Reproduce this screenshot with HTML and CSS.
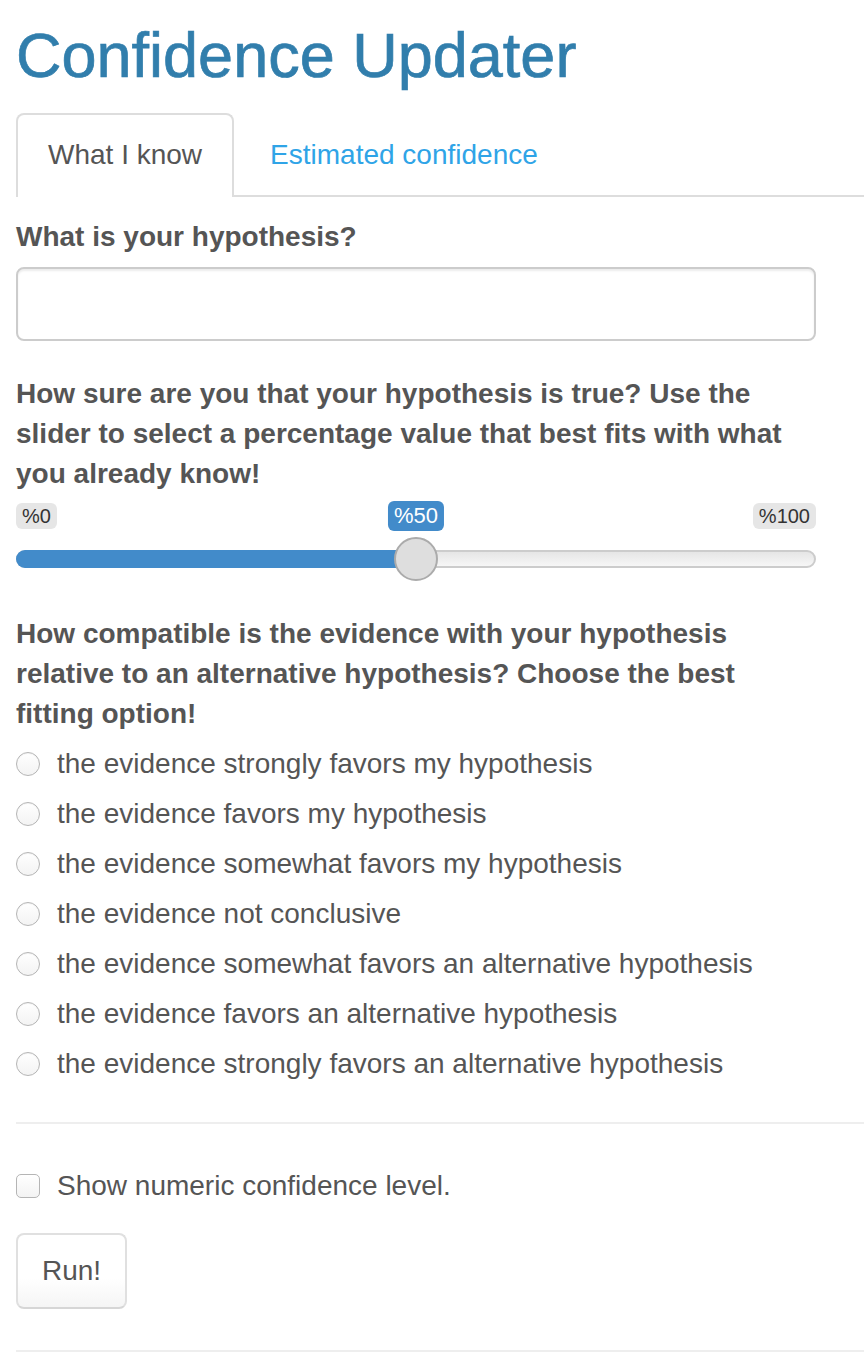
FILE: index.html
```html
<!DOCTYPE html>
<html>
<head>
<meta charset="utf-8">
<title>Confidence Updater</title>
<link rel="stylesheet" href="styles.css">
</head>
<body>
<div class="page">
  <h2 class="title">Confidence Updater</h2>
  <ul class="tabs">
    <li class="tab active">What I know</li>
    <li class="tab"><a class="tab-link" href="#">Estimated confidence</a></li>
  </ul>
  <div class="tab-content">
    <div class="form-group">
      <label class="control-label">What is your hypothesis?</label>
      <div class="text-input"></div>
    </div>
    <div class="form-group slider-group">
      <label class="control-label">How sure are you that your hypothesis is true? Use the slider to select a percentage value that best fits with what you already know!</label>
      <div class="slider">
        <div class="slider-labels">
          <span class="irs-min">%0</span>
          <span class="irs-single">%50</span>
          <span class="irs-max">%100</span>
        </div>
        <div class="track">
          <div class="bar" style="width:50%"></div>
          <div class="handle" style="left:50%"></div>
        </div>
      </div>
    </div>
    <div class="form-group radios">
      <label class="control-label">How compatible is the evidence with your hypothesis relative to an alternative hypothesis? Choose the best fitting option!</label>
      <div class="radio"><span class="radio-dot"></span><span>the evidence strongly favors my hypothesis</span></div>
      <div class="radio"><span class="radio-dot"></span><span>the evidence favors my hypothesis</span></div>
      <div class="radio"><span class="radio-dot"></span><span>the evidence somewhat favors my hypothesis</span></div>
      <div class="radio"><span class="radio-dot"></span><span>the evidence not conclusive</span></div>
      <div class="radio"><span class="radio-dot"></span><span>the evidence somewhat favors an alternative hypothesis</span></div>
      <div class="radio"><span class="radio-dot"></span><span>the evidence favors an alternative hypothesis</span></div>
      <div class="radio"><span class="radio-dot"></span><span>the evidence strongly favors an alternative hypothesis</span></div>
    </div>
    <hr class="rule rule-top">
    <div class="checkbox"><span class="check-box"></span><span>Show numeric confidence level.</span></div>
    <button class="btn">Run!</button>
    <hr class="rule rule-bottom">
  </div>
</div>
</body>
</html>
```
FILE: styles.css
```css
html, body {
  margin: 0;
  padding: 0;
  background: #fff;
}
body {
  font-family: "Liberation Sans", Arial, sans-serif;
  font-size: 28px;
  line-height: 40px;
  color: #555;
}
.page {
  padding-left: 16px;
  overflow: hidden;
}
.title {
  font-size: 63px;
  line-height: 70px;
  font-weight: 500;
  color: #317eac;
  -webkit-text-stroke: 0.7px #317eac;
  margin: 20px 0 23px;
}
.tabs {
  list-style: none;
  margin: 0;
  padding: 0;
  display: flex;
  border-bottom: 2px solid #ddd;
}
.tab {
  padding: 20px 30px;
  border: 2px solid transparent;
  border-bottom: none;
  border-radius: 8px 8px 0 0;
  margin-right: 4px;
  margin-bottom: -2px;
}
.tab.active {
  border-color: #ddd;
  background: #fff;
  color: #555;
  padding-bottom: 22px;
}
.tab-link {
  color: #2fa4e7;
  text-decoration: none;
}
.tab-content {
  padding-top: 20px;
}
.form-group {
  margin-bottom: 30px;
  width: 800px;
}
.control-label {
  display: block;
  font-weight: bold;
  margin-bottom: 10px;
}
.slider-group {
  padding-top: 3px;
  margin-bottom: 46px;
}
.slider-group .control-label {
  margin-bottom: 7px;
}
.text-input {
  box-sizing: border-box;
  width: 800px;
  height: 74px;
  border: 2px solid #ccc;
  border-radius: 8px;
  box-shadow: inset 0 2px 2px rgba(0,0,0,0.075);
}
.slider {
  width: 800px;
  padding-top: 2px;
}
.slider-labels {
  position: relative;
  display: flex;
  justify-content: space-between;
  height: 30px;
}
.irs-min, .irs-max {
  font-size: 20px;
  line-height: 22px;
  padding: 2px 6px;
  height: 22px;
  background: #e6e6e6;
  border-radius: 6px;
  color: #333;
}
.irs-single {
  position: absolute;
  left: 50%;
  transform: translateX(-50%);
  top: -2px;
  font-size: 22px;
  line-height: 26px;
  padding: 2px 6px;
  background: #428bca;
  color: #fff;
  border-radius: 6px;
}
.track {
  position: relative;
  box-sizing: border-box;
  margin-top: 17px;
  height: 18px;
  border: 2px solid #ccc;
  border-radius: 16px;
  background: linear-gradient(to bottom, #ddd -50%, #fff 150%);
}
.bar {
  position: absolute;
  left: -2px;
  top: -2px;
  bottom: -2px;
  background: #428bca;
  border-radius: 16px 0 0 16px;
}
.handle {
  position: absolute;
  top: 50%;
  box-sizing: border-box;
  width: 44px;
  height: 44px;
  margin-left: -22px;
  margin-top: -22px;
  border: 2px solid #ababab;
  background: #dedede;
  border-radius: 50%;
}
.radios {
  margin-bottom: 0;
}
.radio, .checkbox {
  display: flex;
  align-items: center;
  margin-top: 10px;
}
.radio-dot {
  box-sizing: border-box;
  width: 24px;
  height: 24px;
  border-radius: 50%;
  border: 1px solid #b5b5b5;
  background: linear-gradient(#fff, #f3f3f3);
  box-shadow: inset 0 1px 1px rgba(0,0,0,0.05);
  margin-right: 17px;
  flex: none;
}
.rule {
  border: 0;
  border-top: 2px solid #eee;
  margin: 40px 0 0;
  height: 0;
}
.rule-top {
  margin-top: 38px;
}
.rule-bottom {
  margin-top: 41px;
}
.checkbox {
  margin-top: 42px;
}
.check-box {
  box-sizing: border-box;
  width: 24px;
  height: 24px;
  border-radius: 5px;
  border: 1px solid #b5b5b5;
  background: linear-gradient(#fff, #f3f3f3);
  margin-right: 17px;
  flex: none;
}
.btn {
  display: block;
  margin-top: 27px;
  box-sizing: border-box;
  height: 76px;
  padding: 16px 24px;
  font-family: "Liberation Sans", Arial, sans-serif;
  font-size: 28px;
  line-height: 40px;
  color: #555;
  border: 2px solid #e0e0e0;
  border-bottom-color: #d6d6d6;
  border-radius: 8px;
  background: linear-gradient(#fff, #fff 60%, #f5f5f5);
}
```
